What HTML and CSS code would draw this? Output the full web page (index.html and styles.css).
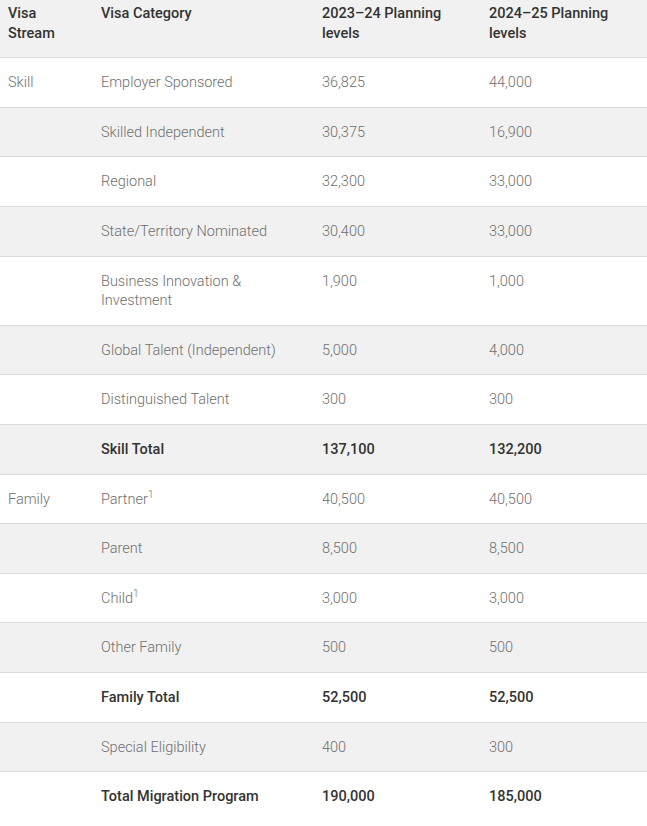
FILE: index.html
```html
<!DOCTYPE html>
<html lang="en">
<head>
<meta charset="utf-8">
<title>Migration Program planning levels</title>
<link rel="stylesheet" href="styles.css">
</head>
<body>
<div class="viewport">
<table class="plan-table">
  <colgroup>
    <col class="c-stream">
    <col class="c-cat">
    <col class="c-y1">
    <col class="c-y2">
  </colgroup>
  <thead>
    <tr>
      <th>Visa Stream</th>
      <th>Visa Category</th>
      <th>2023–24 Planning levels</th>
      <th>2024–25 Planning levels</th>
    </tr>
  </thead>
  <tbody>
    <tr><td>Skill</td><td>Employer Sponsored</td><td>36,825</td><td>44,000</td></tr>
    <tr class="alt"><td></td><td>Skilled Independent</td><td>30,375</td><td>16,900</td></tr>
    <tr><td></td><td>Regional</td><td>32,300</td><td>33,000</td></tr>
    <tr class="alt"><td></td><td>State/Territory Nominated</td><td>30,400</td><td>33,000</td></tr>
    <tr><td></td><td>Business Innovation &amp; Investment</td><td>1,900</td><td>1,000</td></tr>
    <tr class="alt"><td></td><td>Global Talent (Independent)</td><td>5,000</td><td>4,000</td></tr>
    <tr><td></td><td>Distinguished Talent</td><td>300</td><td>300</td></tr>
    <tr class="alt total"><td></td><td>Skill Total</td><td>137,100</td><td>132,200</td></tr>
    <tr><td>Family</td><td>Partner<sup>1</sup></td><td>40,500</td><td>40,500</td></tr>
    <tr class="alt"><td></td><td>Parent</td><td>8,500</td><td>8,500</td></tr>
    <tr><td></td><td>Child<sup>1</sup></td><td>3,000</td><td>3,000</td></tr>
    <tr class="alt"><td></td><td>Other Family</td><td>500</td><td>500</td></tr>
    <tr class="total"><td></td><td>Family Total</td><td>52,500</td><td>52,500</td></tr>
    <tr class="alt"><td></td><td>Special Eligibility</td><td>400</td><td>300</td></tr>
    <tr class="total last"><td></td><td>Total Migration Program</td><td>190,000</td><td>185,000</td></tr>
  </tbody>
</table>
</div>
</body>
</html>
```
FILE: styles.css
```css
html, body {
  margin: 0;
  padding: 0;
  background: #ffffff;
}
.viewport {
  width: 647px;
  height: 826px;
  overflow: hidden;
}
.plan-table {
  width: 647px;
  border-collapse: collapse;
  table-layout: fixed;
  font-family: Roboto, "Liberation Sans", sans-serif;
  font-size: 14.5px;
  line-height: 19.6px;
  margin-top: -10px;
}
.c-stream { width: 93px; }
.c-cat { width: 221px; }
.c-y1 { width: 167px; }
.c-y2 { width: 166px; }
.plan-table th {
  background: #f1f1f1;
  color: #333333;
  font-weight: 500;
  text-align: left;
  vertical-align: top;
  padding: 14px 8px 14px 8px;
  border-bottom: 1px solid #dcdcdc;
}
.plan-table td {
  color: #6f6f6f;
  font-weight: 300;
  vertical-align: top;
  padding: 15px 8px 14px 8px;
  border-bottom: 1px solid #dcdcdc;
}
.plan-table tr.alt td {
  background: #f1f1f1;
}
.plan-table tr.total td {
  color: #333333;
  font-weight: 500;
}
.plan-table tr.last td {
  border-bottom: none;
}
.plan-table sup {
  font-size: 10px;
  line-height: 0;
  vertical-align: 6px;
}
```
